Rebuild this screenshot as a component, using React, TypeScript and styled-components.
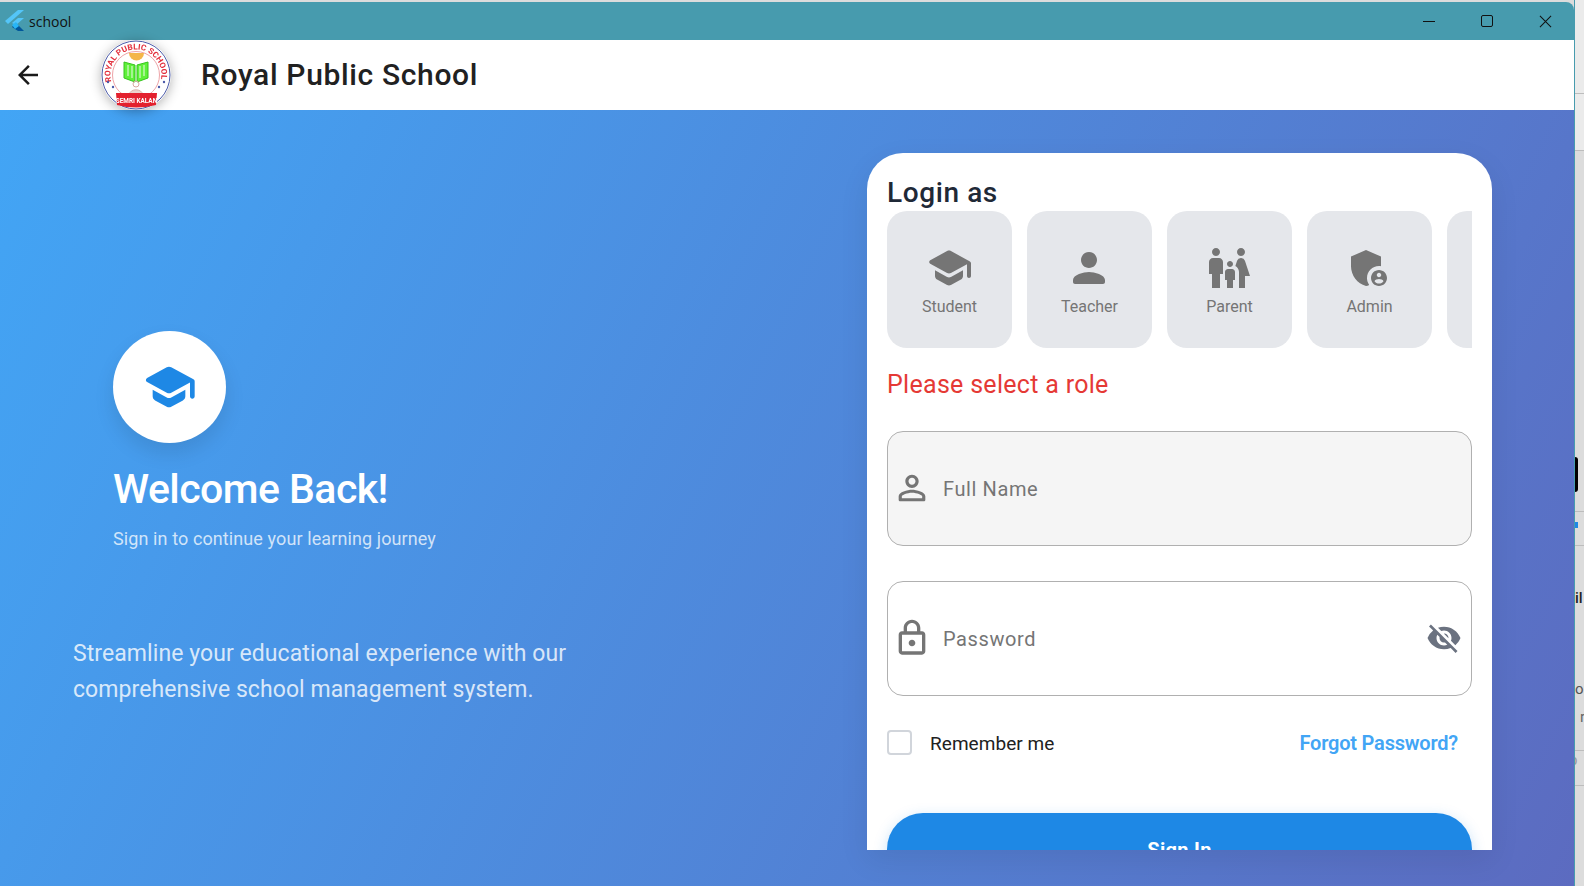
import React from "react";
import styled, { createGlobalStyle } from "styled-components";
import { MdAdminPanelSettings, MdFamilyRestroom, MdVisibilityOff } from "react-icons/md";

const SCHOOL =
  "M5 13.18v2.81c0 .73.4 1.41 1.04 1.76l5 2.73c.6.33 1.32.33 1.92 0l5-2.73c.64-.35 1.04-1.03 1.04-1.76v-2.81l-6.04 3.3c-.6.33-1.32.33-1.92 0L5 13.18zm6.04-9.66l-8.43 4.6c-.69.38-.69 1.38 0 1.76l8.43 4.6c.6.33 1.32.33 1.92 0L21 10.09V16c0 .55.45 1 1 1s1-.45 1-1V9.59c0-.37-.2-.7-.52-.88l-9.52-5.19c-.6-.32-1.32-.32-1.92 0z";
const PERSON =
  "M12 12c2.21 0 4-1.79 4-4s-1.79-4-4-4-4 1.79-4 4 1.79 4 4 4zm0 2c-2.67 0-8 1.34-8 4v1c0 .55.45 1 1 1h14c.55 0 1-.45 1-1v-1c0-2.66-5.33-4-8-4z";
const PERSON_OUTLINE =
  "M12 5.9c1.16 0 2.1.94 2.1 2.1s-.94 2.1-2.1 2.1S9.9 9.16 9.9 8s.94-2.1 2.1-2.1m0 9c2.97 0 6.1 1.46 6.1 2.1v1.1H5.9V17c0-.64 3.13-2.1 6.1-2.1M12 4C9.79 4 8 5.79 8 8s1.79 4 4 4 4-1.79 4-4-1.79-4-4-4zm0 9c-2.67 0-8 1.34-8 4v2c0 .55.45 1 1 1h14c.55 0 1-.45 1-1v-2c0-2.66-5.33-4-8-4z";
const LOCK_OUTLINE =
  "M18 8h-1V6c0-2.76-2.24-5-5-5S7 3.24 7 6v2H6c-1.1 0-2 .9-2 2v10c0 1.1.9 2 2 2h12c1.1 0 2-.9 2-2V10c0-1.1-.9-2-2-2zM9 6c0-1.66 1.34-3 3-3s3 1.34 3 3v2H9V6zm9 14H6V10h12v10zm-6-3c1.1 0 2-.9 2-2s-.9-2-2-2-2 .9-2 2 .9 2 2 2z";

const GlobalStyle = createGlobalStyle`
  html, body {
    margin: 0;
    padding: 0;
    background: #dcdcdc;
    font-family: Roboto, "Liberation Sans", sans-serif;
  }
  * { box-sizing: border-box; }
`;

const Icon: React.FC<{ d: string; size: number; color: string }> = ({ d, size, color }) => (
  <svg width={size} height={size} viewBox="0 0 24 24" fill={color} style={{ flex: "none" }}>
    <path d={d} />
  </svg>
);

const FlutterLogo = () => (
  <svg width="20" height="22" viewBox="0 0 20 22">
    <polygon points="1,11 14,0 20,0 4,14" fill="#54c5f8" />
    <polygon points="8,13 14,8 20,8 12,15" fill="#54c5f8" />
    <polygon points="8,17 12,13 20,21 14,21" fill="#01579b" />
    <polygon points="8,15 12,12 15,16 11,19" fill="#29b6f6" />
  </svg>
);

const BackArrow = () => (
  <svg width="30" height="30" viewBox="0 0 24 24" fill="#1a1a1a">
    <path d="M20 11H7.83l5.59-5.59L12 4l-8 8 8 8 1.41-1.41L7.83 13H20v-2z" />
  </svg>
);

const SchoolLogo = () => (
  <svg width="70" height="70" viewBox="0 0 70 70">
    <defs>
      <path id="logo-arc" d="M10.4 41.6 A25.5 25.5 0 1 1 59.6 41.6" />
    </defs>
    <circle cx="35" cy="35" r="34" fill="#fff" stroke="#4b5aa8" strokeWidth="1" />
    <circle cx="35" cy="35" r="23.5" fill="#fff" stroke="#e98d92" strokeWidth="0.8" />
    <text fontFamily="Roboto, sans-serif" fontSize="8" fontWeight="700" fill="#e3303d">
      <textPath href="#logo-arc" startOffset="0" textLength="91" lengthAdjust="spacingAndGlyphs">
        ROYAL PUBLIC SCHOOL
      </textPath>
    </text>
    <path d="M28 13 A7.5 7.5 0 0 0 43 13 Z" fill="#f4b64a" />
    <path d="M23 22 L34 25 V42 L23 38 Z M47 22 L36 25 V42 L47 38 Z" fill="#5ff03a" stroke="#37c41e" strokeWidth="1" />
    <path d="M27 25 V36 M31 26 V38 M39 26 V38 M43 25 V36" stroke="#d5f9cb" strokeWidth="1.2" />
    <circle cx="35" cy="44" r="3" fill="none" stroke="#d8a8a0" strokeWidth="1" />
    <path d="M28 55 C29 48 41 48 42 55 Z" fill="#ecd2cc" stroke="#d8a8a0" strokeWidth="0.8" />
    <path d="M15 53 L56 53 L55 65 Q35 70 16 65 Z" fill="#e3202e" />
    <text x="35.5" y="62.5" textAnchor="middle" fontFamily="Roboto, sans-serif" fontSize="6.4" fontWeight="700" fill="#fff">
      SEMRI KALAN
    </text>
    <circle cx="7" cy="42" r="1.2" fill="#4b5aa8" />
    <circle cx="12" cy="47" r="1.2" fill="#4b5aa8" />
    <circle cx="63" cy="42" r="1.2" fill="#4b5aa8" />
    <circle cx="58" cy="47" r="1.2" fill="#4b5aa8" />
  </svg>
);

const roles = [
  { label: "Student", icon: <Icon d={SCHOOL} size={48} color="#757575" /> },
  { label: "Teacher", icon: <Icon d={PERSON} size={48} color="#757575" /> },
  { label: "Parent", icon: <MdFamilyRestroom size={48} color="#757575" /> },
  { label: "Admin", icon: <MdAdminPanelSettings size={48} color="#757575" /> },
  { label: "", icon: null },
];

export default function App() {
  return (
    <>
      <GlobalStyle />
      <Screen>
        <Window>
          <TitleBar>
            <TitleLeft>
              <FlutterLogo />
              <AppName>school</AppName>
            </TitleLeft>
            <Controls>
              <MinimizeGlyph />
              <MaximizeGlyph />
              <CloseGlyph viewBox="0 0 14 14">
                <path d="M1 1 L13 13 M13 1 L1 13" stroke="#111" strokeWidth="1.1" />
              </CloseGlyph>
            </Controls>
          </TitleBar>
          <AppBar>
            <BackButton>
              <BackArrow />
            </BackButton>
            <LogoWrap>
              <SchoolLogo />
            </LogoWrap>
            <SchoolName>Royal Public School</SchoolName>
          </AppBar>
          <Body>
            <Intro>
              <Hero>
                <HeroCircle>
                  <Icon d={SCHOOL} size={56} color="#1e88e5" />
                </HeroCircle>
                <Welcome>Welcome Back!</Welcome>
                <Subtitle>Sign in to continue your learning journey</Subtitle>
              </Hero>
              <Blurb>
                Streamline your educational experience with our comprehensive school management system.
              </Blurb>
            </Intro>
            <Card>
              <CardTitle>Login as</CardTitle>
              <RoleRow>
                {roles.map((r, i) => (
                  <RoleTile key={i}>
                    <RoleIcon>{r.icon}</RoleIcon>
                    {r.label && <RoleLabel>{r.label}</RoleLabel>}
                  </RoleTile>
                ))}
              </RoleRow>
              <RoleError>Please select a role</RoleError>
              <Field $filled>
                <Icon d={PERSON_OUTLINE} size={40} color="#757575" />
                <Placeholder>Full Name</Placeholder>
              </Field>
              <Field>
                <Icon d={LOCK_OUTLINE} size={40} color="#757575" />
                <Placeholder>Password</Placeholder>
                <EyeButton>
                  <MdVisibilityOff size={36} color="#6b7280" />
                </EyeButton>
              </Field>
              <OptionsRow>
                <RememberGroup>
                  <CheckBox />
                  <RememberText>Remember me</RememberText>
                </RememberGroup>
                <ForgotLink>Forgot Password?</ForgotLink>
              </OptionsRow>
              <SignIn>Sign In</SignIn>
            </Card>
          </Body>
        </Window>
        <BehindStrip>
          <StripRow $h={94} $light />
          <StripRow $h={57} $light />
          <StripRow $h={306} $plain />
          <StripBlob />
          <StripRow $h={20} />
          <StripRow $h={34}>
            <StripMark />
          </StripRow>
          <StripText $h={104} $center $weight={500} $color="#222">il</StripText>
          <StripText $h={48} $color="#555">o</StripText>
          <StripText $h={28} $x={5} $color="#666">r</StripText>
          <StripRow $h={25} />
          <StripText $h={35} $top $x={-6} $color="#999" $line>p</StripText>
        </BehindStrip>
      </Screen>
    </>
  );
}

const Screen = styled.div`
  width: 1584px;
  height: 886px;
  display: flex;
  overflow: hidden;
`;

const Window = styled.div`
  width: 1575px;
  height: 886px;
  flex: none;
  display: flex;
  flex-direction: column;
  padding-top: 2px;
  border-right: 1px solid #479bae;
`;

const TitleBar = styled.div`
  height: 38px;
  flex: none;
  background: #479bae;
  border-top-right-radius: 8px;
  display: flex;
  align-items: center;
  justify-content: space-between;
`;

const TitleLeft = styled.div`
  display: flex;
  align-items: center;
  gap: 5px;
  padding-left: 4px;
`;

const AppName = styled.span`
  font-family: "Open Sans", sans-serif;
  font-size: 14px;
  color: #111;
`;

const Controls = styled.div`
  display: flex;
  align-items: center;
  gap: 46px;
  padding-right: 22px;
`;

const MinimizeGlyph = styled.div`
  width: 12px;
  height: 1px;
  background: #111;
`;

const MaximizeGlyph = styled.div`
  width: 12px;
  height: 12px;
  border: 1.2px solid #111;
  border-radius: 2px;
`;

const CloseGlyph = styled.svg`
  width: 13px;
  height: 13px;
`;

const AppBar = styled.header`
  height: 70px;
  flex: none;
  background: #fff;
  display: flex;
  align-items: center;
`;

const BackButton = styled.div`
  width: 101px;
  padding-left: 13px;
  display: flex;
  align-items: center;
`;

const LogoWrap = styled.div`
  width: 70px;
  height: 70px;
  border-radius: 50%;
  box-shadow: 0 2px 12px rgba(0, 0, 0, 0.3);
  display: flex;
  filter: blur(0.35px);
`;

const SchoolName = styled.h1`
  margin: -2px 0 0 30px;
  font-size: 30px;
  font-weight: 500;
  letter-spacing: 0.65px;
  color: #212121;
`;

const Body = styled.main`
  flex: 1;
  min-height: 0;
  display: flex;
  justify-content: space-between;
  padding: 43px 82px 36px 73px;
  background: linear-gradient(116.2deg, #42a5f5 0%, #5c6bc0 100%);
`;

const Intro = styled.section`
  width: 520px;
  padding-top: 178px;
  display: flex;
  flex-direction: column;
`;

const Hero = styled.div`
  padding-left: 40px;
  display: flex;
  flex-direction: column;
  align-items: flex-start;
`;

const HeroCircle = styled.div`
  width: 113px;
  height: 112px;
  padding-right: 2px;
  border-radius: 50%;
  background: #fff;
  box-shadow: 0 10px 20px rgba(0, 0, 0, 0.1);
  display: flex;
  align-items: center;
  justify-content: center;
`;

const Welcome = styled.h2`
  margin: 22px 0 0;
  font-size: 41px;
  line-height: 48px;
  font-weight: 500;
  letter-spacing: -0.55px;
  color: #fff;
`;

const Subtitle = styled.p`
  margin: 14px 0 0;
  font-size: 18px;
  line-height: 24px;
  letter-spacing: 0.1px;
  color: rgba(255, 255, 255, 0.75);
`;

const Blurb = styled.p`
  margin: 85px 0 0;
  width: 500px;
  font-size: 23px;
  line-height: 36px;
  letter-spacing: 0.07px;
  color: rgba(255, 255, 255, 0.8);
`;

const Card = styled.section`
  width: 625px;
  flex: none;
  padding: 20px;
  background: #fff;
  border-radius: 36px 36px 0 0;
  overflow: hidden;
  box-shadow: 0 10px 30px rgba(0, 0, 0, 0.08);
`;

const CardTitle = styled.h3`
  margin: 0;
  height: 38px;
  font-size: 28px;
  line-height: 40px;
  font-weight: 500;
  letter-spacing: 0.6px;
  color: #1f2937;
`;

const RoleRow = styled.div`
  display: flex;
  gap: 15px;
  overflow: hidden;
`;

const RoleTile = styled.div`
  width: 125px;
  height: 137px;
  flex: none;
  padding-top: 33px;
  border-radius: 20px;
  background: #e5e7eb;
  display: flex;
  flex-direction: column;
  align-items: center;
`;

const RoleIcon = styled.div`
  display: flex;
  padding-right: 2px;
`;

const RoleLabel = styled.span`
  margin-top: 5px;
  font-size: 16px;
  line-height: 20px;
  color: #757575;
`;

const RoleError = styled.p`
  margin: 21px 0 0;
  font-size: 25px;
  line-height: 32px;
  letter-spacing: 0.3px;
  color: #e53935;
`;

const Field = styled.div<{ $filled?: boolean }>`
  height: 115px;
  margin: ${({ $filled }) => ($filled ? "30px" : "35px")} 0 0;
  padding: 0 9px 2px 4px;
  display: flex;
  align-items: center;
  gap: 11px;
  border: 1.5px solid #b0b0b0;
  border-radius: 16px;
  background: ${({ $filled }) => ($filled ? "#f5f5f5" : "#fff")};
`;

const Placeholder = styled.span`
  flex: 1;
  margin-top: 3px;
  font-size: 20px;
  letter-spacing: 0.6px;
  color: #757575;
`;

const EyeButton = styled.div`
  display: flex;
`;

const OptionsRow = styled.div`
  margin-top: 34px;
  padding-right: 14px;
  display: flex;
  align-items: center;
  justify-content: space-between;
`;

const RememberGroup = styled.div`
  display: flex;
  align-items: center;
  gap: 18px;
`;

const CheckBox = styled.div`
  width: 25px;
  height: 25px;
  border: 2px solid #d1d5db;
  border-radius: 4px;
`;

const RememberText = styled.span`
  margin-top: 1px;
  font-size: 19px;
  letter-spacing: 0.05px;
  color: #212121;
`;

const ForgotLink = styled.a`
  font-size: 20px;
  font-weight: 600;
  letter-spacing: -0.2px;
  color: #42a5f5;
`;

const SignIn = styled.div`
  height: 74px;
  margin-top: 58px;
  border-radius: 36px;
  background: #1e88e5;
  box-shadow: 0 4px 14px rgba(30, 136, 229, 0.25);
  display: flex;
  align-items: center;
  justify-content: center;
  font-size: 20px;
  font-weight: 700;
  letter-spacing: 0.3px;
  color: #fff;
`;

const BehindStrip = styled.aside`
  flex: 1;
  min-width: 0;
  display: flex;
  flex-direction: column;
  background: #dcdcdc;
  overflow: hidden;
`;

const StripRow = styled.div<{ $h: number; $light?: boolean; $plain?: boolean }>`
  height: ${({ $h }) => $h}px;
  flex: none;
  border-bottom: ${({ $plain }) => ($plain ? "none" : "1px solid #bdbdbd")};
  background: ${({ $light }) => ($light ? "#ebebeb" : "#dcdcdc")};
`;

const StripBlob = styled.div`
  height: 35px;
  width: 3px;
  flex: none;
  background: #000;
  border-radius: 0 4px 4px 0;
`;

const StripMark = styled.div`
  width: 3px;
  height: 6px;
  margin-top: 10px;
  background: #1e88e5;
`;

const StripText = styled.div<{
  $h: number;
  $center?: boolean;
  $top?: boolean;
  $x?: number;
  $weight?: number;
  $color: string;
  $line?: boolean;
}>`
  height: ${({ $h }) => $h}px;
  flex: none;
  padding-left: ${({ $x }) => ($x && $x > 0 ? $x : 0)}px;
  margin-left: ${({ $x }) => ($x && $x < 0 ? $x : 0)}px;
  display: flex;
  align-items: ${({ $center, $top }) => ($center ? "center" : $top ? "flex-start" : "flex-end")};
  font-size: 15px;
  line-height: 18px;
  font-weight: ${({ $weight }) => $weight ?? 400};
  color: ${({ $color }) => $color};
  border-bottom: ${({ $line }) => ($line ? "1px solid #bdbdbd" : "none")};
`;
